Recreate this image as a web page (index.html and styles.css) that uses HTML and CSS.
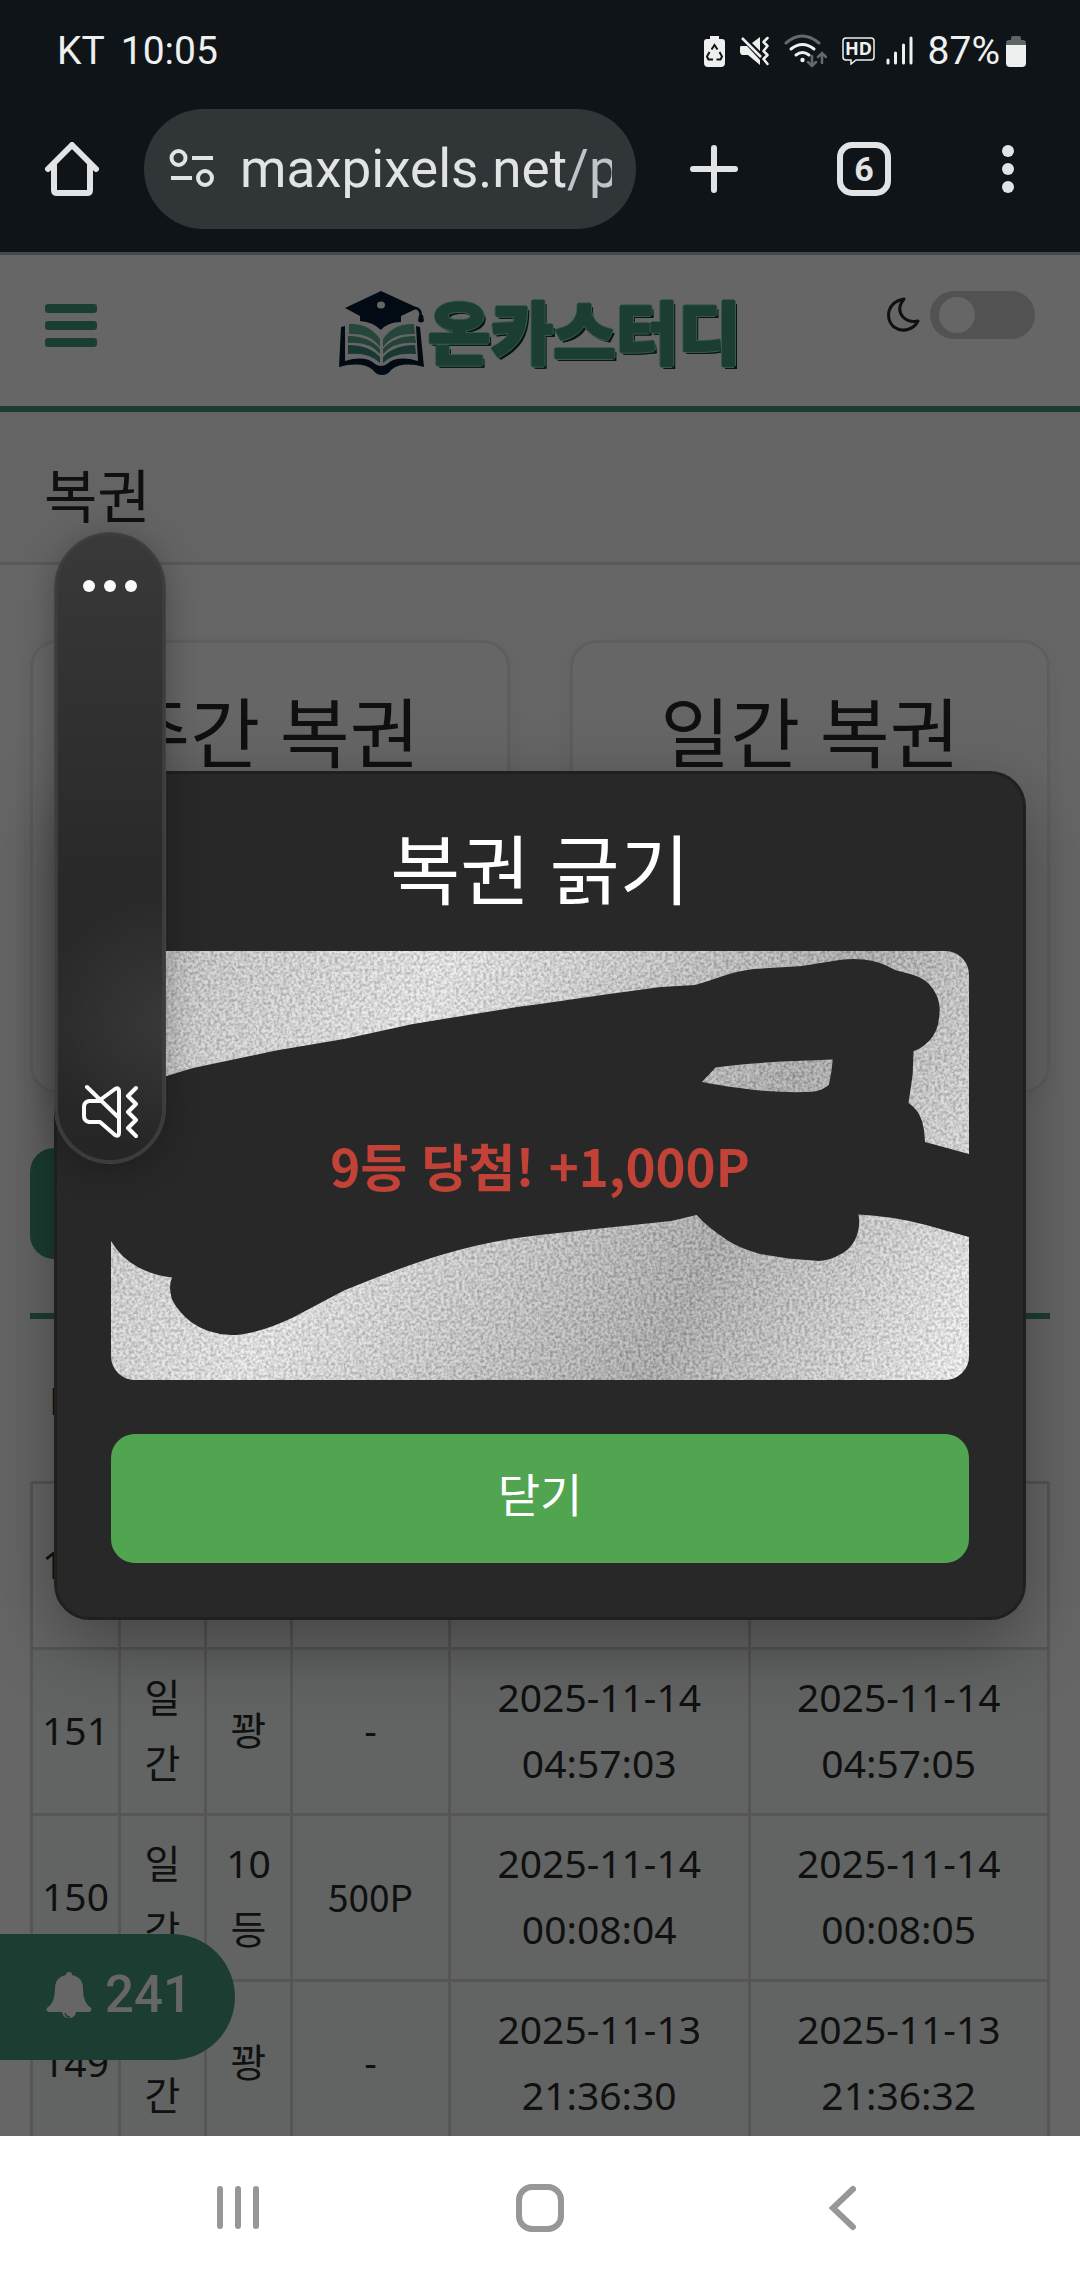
FILE: index.html
```html
<!DOCTYPE html>
<html lang="ko">
<head>
<meta charset="utf-8">
<meta name="viewport" content="width=device-width, initial-scale=1">
<title>복권</title>
<link rel="stylesheet" href="styles.css">
</head>
<body>
<div class="phone">
  <div class="status">
    <span class="status-carrier">KT</span>
    <span class="status-clock">10:05</span>
    <div class="status-icons">
      <svg width="21" height="32" viewBox="0 0 21 32"><path d="M6 1h9v3h3q3 0 3 3v21q0 4-4 4H4q-4 0-4-4V7q0-3 3-3h3z" fill="#eef0f0"/><path d="M7.500 14.500l3-4.500 3 4.500M15.500 17l2.500 4.500-1.500 3h-4M9 24.500H4.500l-1.500-3 2.500-4.500" fill="none" stroke="#0f1418" stroke-width="2"/></svg>
      <svg width="29" height="30" viewBox="0 0 29 30"><path d="M20 1v14l-8-8zM1 10h6l13 14v5L8 19H2q-2-1-2-3v-4q0-2 1-2z" fill="#eef0f0"/><path d="M2 2l19 19" stroke="#eef0f0" stroke-width="2.500"/><path d="M27.500 2l-4 4 4 4-4 5 4 4-4 4 4 5" fill="none" stroke="#eef0f0" stroke-width="2.500" stroke-linejoin="round" stroke-linecap="round"/></svg>
      <svg width="43" height="34" viewBox="0 0 43 34" fill="none" stroke-linecap="round"><path d="M2 9Q18-5 35 9" stroke="#66696b" stroke-width="3"/><path d="M7 15q11.500-9 23 0M12 21q6.500-5 13 0" stroke="#eef0f0" stroke-width="3"/><circle cx="18.500" cy="26" r="2.200" fill="#eef0f0"/><path d="M28 22v10m-4-4l4 4 4-4M38 29V19m-4 4l4-4 4 4" stroke="#66696b" stroke-width="2.500"/></svg>
      <svg width="33" height="28" viewBox="0 0 33 28"><path d="M4 1h25q3 0 3 3v16q0 3-3 3H14l-5 4v-4H4q-3 0-3-3V4q0-3 3-3z" fill="none" stroke="#eef0f0" stroke-width="1.500"/><text x="16.500" y="18" class="hd-mark" text-anchor="middle">HD</text></svg>
      <svg class="signal" width="27" height="29" viewBox="0 0 27 29" stroke="#eef0f0" stroke-width="3" stroke-linecap="round"><path d="M2 24v3M9.500 17v10M17.500 9v18M25 2v25"/></svg>
      <span class="status-percent">87%</span>
      <svg class="battery" width="20" height="32" viewBox="0 0 20 32"><path d="M5 3q0-2 2-2h6q2 0 2 2v2h2q3 0 3 3v2H0V8q0-3 3-3h2z" fill="#5f6365"/><path d="M0 10h20v18q0 4-4 4H4q-4 0-4-4z" fill="#eef0f0"/></svg>
    </div>
  </div>

  <div class="toolbar">
    <button class="tool" aria-label="홈"><svg width="54" height="54" viewBox="0 0 54 54" fill="none" stroke="#e2e3e5" stroke-width="6" stroke-linejoin="round" stroke-linecap="round"><path d="M3 27L27 3l24 24M9 23v25q0 3 3 3h30q3 0 3-3V23"/></svg></button>
    <div class="address">
      <svg width="46" height="42" viewBox="0 0 46 42" fill="none" stroke="#e2e3e5" stroke-width="4"><circle cx="9.500" cy="10" r="7"/><path d="M23 10h21M2 30h21"/><circle cx="36" cy="30" r="7"/></svg>
      <span class="url">maxpixels.net<span class="url-path">/p</span></span>
    </div>
    <button class="tool" aria-label="새 탭"><svg width="48" height="48" viewBox="0 0 48 48" stroke="#e2e3e5" stroke-width="6" stroke-linecap="round"><path d="M24 3v42M3 24h42"/></svg></button>
    <button class="tool"><span class="tab-count">6</span></button>
    <button class="tool" aria-label="메뉴"><svg width="12" height="48" viewBox="0 0 12 48" fill="#e2e3e5"><circle cx="6" cy="6" r="6"/><circle cx="6" cy="24" r="6"/><circle cx="6" cy="42" r="6"/></svg></button>
  </div>

  <div class="viewport">
    <div class="page">
      <header class="site-header">
        <button class="menu" aria-label="전체 메뉴"><span></span><span></span><span></span></button>
        <a class="logo" href="#">
          <svg width="86" height="84" viewBox="0 0 86 84">
            <path d="M2 36l4-1v35q20-6 30 3 6 4 12 0 10-9 31-3l-2-35 4 1 4 40q-22-6-33 3-3 5-9 5t-9-5Q23 70 0 76z" fill="#061c30"/>
            <path d="M10 33q20-1 31 15v8Q31 42 10 43zM75 33q-20-1-31 15v8q10-14 32-13z" fill="#5fb091"/>
            <path d="M9 45q21 0 32 13v5Q30 50 9 52zM76 45q-21 0-32 13v5q11-13 33-11z" fill="#57a58c"/>
            <path d="M9 54q21 0 32 12v6Q30 61 9 63zM76 54q-21 0-32 12v6q11-11 33-9z" fill="#3f8c7c"/>
            <path d="M42 0l37 17-17 8v6q-13 0-20 8-8-8-21-9v-5L6 17z" fill="#061c30"/>
            <ellipse cx="42" cy="14" rx="4" ry="3.500" fill="#fff"/>
            <path d="M76 17q6 0 6 10" fill="none" stroke="#061c30" stroke-width="2.500"/><path d="M80 24h4l1 6q-3 3-6 0z" fill="#061c30"/>
          </svg>
          <span class="logo-text">온카스터디</span>
        </a>
        <label class="theme">
          <svg width="33" height="36" viewBox="0 0 33 36"><path d="M17 2Q5 4 2 14q-2 10 5 16 7 5 15 2 6-2 9-8-9 2-15-4-7-8 1-18z" fill="none" stroke="#292929" stroke-width="3" stroke-linejoin="round"/></svg>
          <input type="checkbox" aria-label="다크 모드">
        </label>
      </header>
      <div class="page-title"><h1>복권</h1></div>
      <main class="content">
        <div class="cards">
          <section class="card"><h2>주간 복권</h2></section>
          <section class="card"><h2>일간 복권</h2></section>
        </div>
        <button class="history" aria-label="복권 내역"></button>
        <div class="records">
          <table>
            <colgroup><col class="c-id"><col class="c-kind"><col class="c-kind"><col class="c-point"><col><col></colgroup>
            <thead><tr><th>No</th><th></th><th></th><th></th><th></th><th></th></tr></thead>
            <tbody>
              <tr><td>152</td><td></td><td></td><td></td><td></td><td></td></tr>
              <tr class="past"><td>151</td><td>일간</td><td>꽝</td><td>-</td><td>2025-11-14 04:57:03</td><td>2025-11-14 04:57:05</td></tr>
              <tr class="past"><td>150</td><td>일간</td><td>10등</td><td class="point">500P</td><td>2025-11-14 00:08:04</td><td>2025-11-14 00:08:05</td></tr>
              <tr class="past"><td>149</td><td>일간</td><td>꽝</td><td>-</td><td>2025-11-13 21:36:30</td><td>2025-11-13 21:36:32</td></tr>
            </tbody>
          </table>
        </div>
      </main>
    </div>
    <button class="alerts">
      <svg width="46" height="48" viewBox="0 0 46 48"><path d="M23 1q3 0 3 3 11 2 11 14 0 14 8 19 1 1 0 3-1 1-2 1H30q-1 6-7 6t-7-6H3q-1 0-2-1-1-2 0-3 8-5 8-19Q9 6 20 4q0-3 3-3z" fill="#fff"/><path d="M19 42q1 4 5 4" fill="none" stroke="#489b7d" stroke-width="1.500"/></svg>
      241
    </button>

    <div class="overlay">
      <div class="modal" role="dialog" aria-labelledby="scratch-title">
        <h2 id="scratch-title">복권 긁기</h2>
        <svg class="scratch" viewBox="0 0 858 429">
          <defs>
            <linearGradient id="foil" gradientUnits="userSpaceOnUse" x1="0" y1="0" x2="858" y2="429">
              <stop offset="0" stop-color="#bcbcbc"/><stop offset=".32" stop-color="#eaeaea"/><stop offset=".7" stop-color="#a6a6a6"/><stop offset="1" stop-color="#f8f8f8"/>
            </linearGradient>
            <filter id="grain" x="0" y="0" width="100%" height="100%" color-interpolation-filters="sRGB">
              <feTurbulence type="fractalNoise" baseFrequency=".33" numOctaves="2" seed="4"/>
              <feColorMatrix values="1.800 0 0 0 -.2  1.800 0 0 0 -.2  1.800 0 0 0 -.2  0 0 0 0 .26"/>
            </filter>
          </defs>
          <rect width="858" height="429" fill="url(#foil)"/>
          <rect width="858" height="429" filter="url(#grain)"/>
          <path fill="#282828" fill-rule="evenodd" d="M0 135L54 125.500 82 117 165 99.500 233 88 302 73 406 56 429 53 498 43 550 36 584 34Q598 30 612 25 626 20 643 18L691 15 722 10Q738 7 753 8.600 768 10 784 19L801 23.600Q816 28 822 38 830 50 828.500 62 828 80 818 90 810 98 802.600 100L801.600 124 797.500 152Q807 158 811 170 814 180 814 191L858 203V286L815 274Q780 265 747.500 263.600 750 276 744 289 738 300 728 304 720 309 708 310L677 307.500 649 303Q628 297 616 289 595 275 585.700 264L560 270 498 276.400 429 284Q380 289 330 304 290 316 233 339.600L182 366.400Q145 384 119.700 384 96 383 80 371 68 362 61 348.600 57 335 61 326.400 44 325 26.700 316 10 307 0 290Z
          M591 131L604.600 116.400Q640 111 721.700 108.600 721 120 718 133.600 712 140 701 140.700 680 142 649 139.600 610 135 591 131Z"/>
          <text class="prize" x="429" y="236" text-anchor="middle">9등 당첨! +1,000P</text>
        </svg>
        <button class="close">닫기</button>
      </div>
    </div>
  </div>

  <nav class="navbar">
    <button aria-label="최근 앱"><svg width="42" height="48" viewBox="0 0 42 48" stroke="#979797" stroke-width="6" stroke-linecap="round"><path d="M3 5v37M21 5v37M39 5v37"/></svg></button>
    <button aria-label="홈 화면"><svg width="48" height="48" viewBox="0 0 48 48" fill="none" stroke="#979797" stroke-width="6"><rect x="3" y="3" width="42" height="42" rx="13"/></svg></button>
    <button aria-label="뒤로"><svg width="28" height="48" viewBox="0 0 28 48" fill="none" stroke="#979797" stroke-width="6" stroke-linecap="round"><path d="M25 5L5 24l20 19"/></svg></button>
  </nav>

  <aside class="volume">
    <svg width="54" height="12" viewBox="0 0 54 12" fill="#fbfbfb"><circle cx="6" cy="6" r="6"/><circle cx="27" cy="6" r="6"/><circle cx="48" cy="6" r="6"/></svg>
    <svg width="56" height="56" viewBox="0 0 56 56" fill="none" stroke="#fbfbfb" stroke-width="4" stroke-linecap="round" stroke-linejoin="round"><path d="M5 3l31 30M18 16L33 5q4-2 4 2v42q0 4-4 2L18 38H7q-5-1-5-6V23q0-5 5-6h11M54 4l-8 8 8 8-8 8 8 8-8 8 8 8"/></svg>
  </aside>
</div>
</body>
</html>
```
FILE: styles.css
```css
* { box-sizing: border-box; }

body {
  margin: 0;
  font-family: "Noto Sans", "Noto Sans CJK KR", sans-serif;
  color: #292929;
  background: #fff;
}

h1, h2 { margin: 0; font-weight: 400; }
button { border: 0; padding: 0; background: none; font: inherit; color: inherit; }
svg { display: block; flex: none; }

.phone {
  position: relative;
  display: flex;
  flex-direction: column;
  height: 100vh;
  overflow: hidden;
}

/* system status bar */
.status {
  display: flex;
  align-items: center;
  height: 101px;
  padding: 0 54px 0 57px;
  background: #0f1418;
  color: #eef0f0;
  font: 39px/48px Roboto, sans-serif;
}
.status-carrier { margin-right: 16px; }
.status-icons { display: flex; align-items: center; gap: 15px; margin-left: auto; }
.hd-mark { font: 700 18px "Noto Sans", sans-serif; fill: #eef0f0; }
.signal { margin-left: -4px; }
.battery { margin-left: -9px; }

/* browser toolbar */
.toolbar {
  display: grid;
  grid-template-columns: 144px 1fr 156px 144px 144px;
  align-items: center;
  padding: 8px 0 23px;
  background: #0f1418;
  border-bottom: 3px solid #444a4c;
}
.tool { display: flex; justify-content: center; align-items: center; height: 120px; }
.address {
  display: flex;
  align-items: center;
  gap: 25px;
  min-width: 0;
  height: 120px;
  padding: 0 24px 0 25px;
  border-radius: 60px;
  background: #303538;
}
.url {
  flex: 1;
  overflow: hidden;
  white-space: nowrap;
  font: 53px/72px Roboto, sans-serif;
  color: #e2e3e5;
}
.url-path { color: #bfc4c9; }
.tab-count {
  width: 54px;
  height: 54px;
  border: 6px solid #e2e3e5;
  border-radius: 15px;
  font: 700 34px/42px Roboto, sans-serif;
  color: #e2e3e5;
}

/* web page */
.viewport { position: relative; flex: 1; min-height: 0; overflow: hidden; background: #fff; }

.site-header {
  display: grid;
  grid-template-columns: 1fr auto 1fr;
  align-items: start;
  height: 157px;
  padding: 36px 45px 0;
  border-bottom: 6px solid #489b7d;
}
.menu { display: grid; gap: 8px; width: 52px; padding-top: 13px; }
.menu span { height: 9px; border-radius: 3px; background: #489b7d; }
.logo { display: flex; align-items: flex-start; gap: 3px; text-decoration: none; }
.logo-text {
  font: 900 68px/78px "Noto Sans CJK KR", sans-serif;
  color: #489b7d;
  -webkit-text-stroke: 2px #489b7d;
  text-shadow:
    1px 1px #8cded0, -1px 1px #8cded0, 1px -1px #8cded0, -1px -1px #8cded0,
    2px 0 #8cded0, -2px 0 #8cded0, 0 2px #8cded0, 0 -2px #8cded0,
    2px 3px #0a3c23, 3px 3px #0a3c23;
}
.theme { display: flex; justify-content: flex-end; align-items: center; gap: 10px; }
.theme input {
  appearance: none;
  width: 105px;
  height: 48px;
  margin: 0;
  padding: 6px 9px;
  border-radius: 24px;
  background: #ccc;
}
.theme input::before {
  content: "";
  display: block;
  width: 36px;
  height: 36px;
  border-radius: 50%;
  background: #fff;
}

.page-title {
  padding: 42px 44px 24px;
  border-bottom: 3px solid #e1e1e1;
  background: #fafafa;
}
.page-title h1 { font-size: 58px; line-height: 84px; }

.content { padding: 75px 30px 0; }
.cards { display: grid; grid-template-columns: 1fr 1fr; gap: 60px; }
.card {
  height: 453px;
  padding-top: 48px;
  border: 3px solid #ebebeb;
  border-radius: 27px;
  text-align: center;
  box-shadow: 0 6px 24px rgba(0, 0, 0, .06);
}
.card h2, .modal h2 { font-size: 76px; line-height: 84px; }

.history {
  display: block;
  width: 47%;
  height: 111px;
  margin: 55px 0 54px;
  border-radius: 24px;
  background: #489b7d;
}

.records { border-top: 6px solid #489b7d; }
.records table {
  width: 100%;
  table-layout: fixed;
  border-collapse: collapse;
  text-align: center;
  font-size: 39px;
  line-height: 66px;
}
.c-id { width: 88px; }
.c-kind { width: 86px; }
.c-point { width: 158px; }
.records th { height: 163px; padding: 0; font-weight: 400; }
.records td { height: 166px; padding: 0 8px 2px; border: 3px solid #d8d8d8; }
.records .past td { background: #f5faf7; }
.records .point { font-family: "Noto Sans CJK KR", sans-serif; font-size: 37px; }

.alerts {
  position: absolute;
  left: 0;
  bottom: 76px;
  display: flex;
  align-items: center;
  gap: 13px;
  height: 126px;
  padding: 0 43px 4px 46px;
  border-radius: 0 63px 63px 0;
  background: #489b7d;
  color: #fff;
  font: 500 51px/64px Roboto, sans-serif;
}

/* scratch dialog */
.overlay {
  position: absolute;
  inset: 0;
  display: flex;
  justify-content: center;
  align-items: center;
  background: rgba(0, 0, 0, .6);
}
.modal {
  width: 90%;
  padding: 54px;
  border: 3px solid #202020;
  border-radius: 36px;
  background: #282828;
  color: #fff;
  text-align: center;
  box-shadow: 0 24px 72px rgba(0, 0, 0, .35);
}
.scratch { width: 100%; margin: 39px 0 54px; border-radius: 24px; }
.prize { font: 700 51px "Noto Sans CJK KR", sans-serif; fill: #c24238; }
.close {
  width: 100%;
  height: 129px;
  padding-bottom: 14px;
  border-radius: 24px;
  background: #52a550;
  font-size: 46px;
}

/* system navigation */
.navbar {
  display: flex;
  justify-content: center;
  align-items: center;
  height: 144px;
  background: #fff;
}
.navbar button { display: flex; justify-content: center; width: 302px; }

/* volume slider */
.volume {
  position: absolute;
  left: 55px;
  top: 533px;
  display: flex;
  flex-direction: column;
  justify-content: space-between;
  align-items: center;
  width: 110px;
  height: 630px;
  padding: 44px 0 20px;
  border: 3px solid #3c3c3c;
  border-radius: 55px;
  background:
    radial-gradient(circle at 110% 78%, rgba(255, 255, 255, .07), transparent 130px),
    linear-gradient(#393939, #333 20%, #292929 55%, #2a2a2a 80%, #252525);
  box-shadow: 0 0 0 1px #444, 0 6px 36px rgba(0, 0, 0, .3);
}
```
